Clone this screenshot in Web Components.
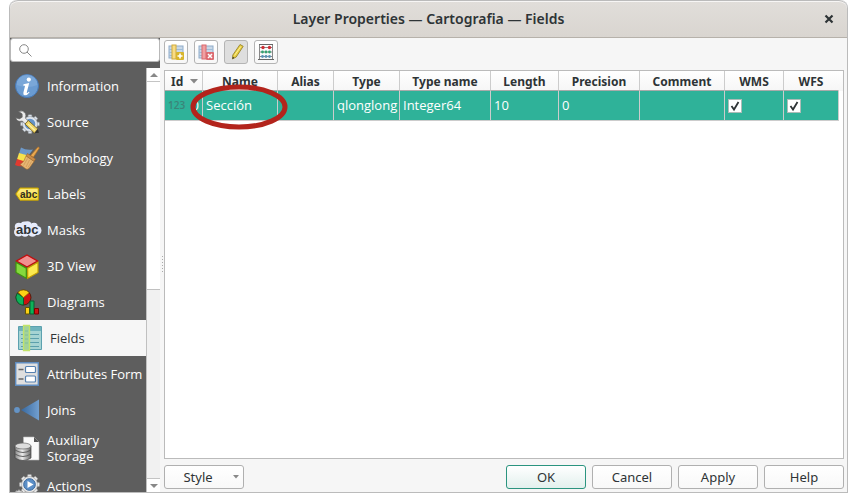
<!DOCTYPE html>
<html lang="en">
<head>
<meta charset="utf-8">
<title>Layer Properties — Cartografia — Fields</title>
<style>
  html, body { margin: 0; height: 100%; background: #fff; }
  body { font: 13px/16px "Noto Sans", sans-serif; color: #2e3436; overflow: hidden; }
</style>
</head>
<body>
<qp-dialog heading="Layer Properties — Cartografia — Fields">
  <qp-sidebar slot="nav">
    <qp-page icon="info">Information</qp-page>
    <qp-page icon="source">Source</qp-page>
    <qp-page icon="symbology">Symbology</qp-page>
    <qp-page icon="labels">Labels</qp-page>
    <qp-page icon="masks">Masks</qp-page>
    <qp-page icon="cube">3D View</qp-page>
    <qp-page icon="diagrams">Diagrams</qp-page>
    <qp-page icon="fields" selected>Fields</qp-page>
    <qp-page icon="form">Attributes Form</qp-page>
    <qp-page icon="joins">Joins</qp-page>
    <qp-page icon="storage">Auxiliary Storage</qp-page>
    <qp-page icon="actions">Actions</qp-page>
  </qp-sidebar>
  <qp-toolbar slot="tools"></qp-toolbar>
  <qp-fields-table slot="content"></qp-fields-table>
  <qp-button slot="menu" drop>Style</qp-button>
  <qp-button slot="actions" primary>OK</qp-button>
  <qp-button slot="actions">Cancel</qp-button>
  <qp-button slot="actions">Apply</qp-button>
  <qp-button slot="actions">Help</qp-button>
</qp-dialog>

<script>
const gear = (cx, cy, r, fill, stroke) => {
  let teeth = '';
  for (let i = 0; i < 8; i++) {
    teeth += `<rect x="${cx - r * .24}" y="${cy - r * 1.25}" width="${r * .48}" height="${r * .6}" rx=".6" transform="rotate(${i * 45} ${cx} ${cy})"/>`;
  }
  return `<g fill="${fill}" stroke="${stroke}" stroke-width=".5">${teeth}<circle cx="${cx}" cy="${cy}" r="${r}"/></g>`;
};

const tableIcon = `
  <rect x="1" y="2" width="14" height="12" fill="#c9d9e8" stroke="#8fabc9"/>
  <path d="M1 5.500h14M1 8.500h14M1 11.500h14" stroke="#9fbcd8" fill="none"/>`;

const icons = {
  info: `<circle cx="12" cy="12" r="11.500" fill="#6a9bd1" stroke="#4678b5"/>
    <path d="M1.500 11a10.500 10.500 0 0 1 21 0q-10 4-21 0z" fill="#8db5e0" opacity=".45"/>
    <circle cx="13.800" cy="5.600" r="2.100" fill="#fff"/>
    <path d="M8.500 10.300l5.700-1.300-2.400 9.300q-.2 1 .6.6l1.500-1.100.6.700q-2.300 3-4.800 2.800-1.900-.3-1.300-2.800l1.700-6.700-1.800-.1z" fill="#fff"/>`,
  source: gear(15, 14, 7.500, '#dfe5ec', '#8b9097') + `
    <circle cx="15" cy="14" r="5.300" fill="#6593c7"/>
    <path d="M3.500 1.500Q8-.5 10.500 3.500q.9 2-.2 4.500l3 3-3 3-3-3Q2 12.500.8 7.800l3.500 1.100 2.900-1.700-.1-3.400z" fill="#ececec" stroke="#666" stroke-width=".7"/>
    <path d="M10 14l3.300-3.500 9.500 8.500-3.300 4.200z" fill="#f0d566" stroke="#6b5a22" stroke-width=".8"/>
    <path d="M13 14l7 6.500" stroke="#fff3a6" stroke-width="1.200"/><path d="M19.500 23.200l3.300-4.200 1.200 3.800z" fill="#333"/>`,
  symbology: `<path d="M6 1.500Q11 4.500 18 3.500L13 10 4 7.500z" fill="#6d98c8"/>
    <path d="M4 7l9 2.500-4 7-7-3z" fill="#f7e24d"/><path d="M2 13l8 2.500-2 4.500q-4 1-8-1z" fill="#e03a30"/>
    <path d="M23.200.8l1.200 1.200-6.200 9.500-2.700-2z" fill="#e8a850" stroke="#a86b28" stroke-width=".7"/>
    <path d="M12.500 7.500l8 5.500-1.500 2.500L11 10z" fill="#c98c4a" stroke="#9b6125" stroke-width=".6"/>
    <path d="M11 10l8 5.500-5 7q-1.500 1-3 .5L5 18.500q4.500-2.500 6-8.500z" fill="#e6b573" stroke="#a36c2c" stroke-width=".6"/>
    <path d="M12.500 12.500L8.500 19.500M14.500 14L11 21M16.500 15.500L13 21.500" stroke="#c48f4e" stroke-width=".6"/>`,
  labels: `<path d="M.8 12L5 6h18.300v12.200H5z" fill="#f7dd45" stroke="#c4a000"/>
    <path d="M5.500 7h17v4.500h-20z" fill="#fdf08e" opacity=".7"/>
    <text x="5" y="15.500" font-family="Liberation Sans" font-weight="bold" font-size="10" fill="#302e20">abc</text>`,
  masks: `<g fill="#e6ebfb"><circle cx="3.500" cy="14" r="4.500"/><circle cx="3.800" cy="8.800" r="4"/><circle cx="9.500" cy="7.500" r="4"/><circle cx="12.500" cy="7.800" r="4.500"/>
    <circle cx="19" cy="8.500" r="3.800"/><circle cx="22" cy="12.500" r="4.500"/><circle cx="10" cy="14.500" r="4.300"/><circle cx="17.500" cy="14.500" r="4.300"/></g>
    <text x="1" y="15.500" font-family="Liberation Sans" font-weight="bold" font-size="13" fill="#2e3436">abc</text>`,
  cube: `<path d="M12 .8l11 6.700v11L12 24.500 1 18.500v-11z" fill="#555"/>
    <path d="M12 1l10.500 6L12 13 1.500 7z" fill="#f29090" stroke="#c40c0c" stroke-width="1.400"/>
    <path d="M1 8.300l10.300 5.900v10L1 18.500z" fill="#84d93e" stroke="#40930f" stroke-width="1.200"/>
    <path d="M23 8.300l-10.300 5.900v10L23 18.500z" fill="#fce94f" stroke="#c4a000" stroke-width="1.200"/>`,
  diagrams: `<circle cx="8.500" cy="7.500" r="7.500" fill="#cc1111" stroke="#50200e"/>
    <path d="M8.500 7.500L2.300 3.200A7.500 7.500 0 0 0 8.500 15z" fill="#0db258" stroke="#075e30"/>
    <path d="M8.500 7.500L3 2.200a7.500 7.500 0 0 1 11.200.5z" fill="#fcd116" stroke="#866d00" stroke-width=".7"/>
    <path d="M10.500 17.500h4v6.500h-4z" fill="#fcd116" stroke="#665500"/>
    <path d="M15 11h4v13h-4z" fill="#0db258" stroke="#075e30"/><path d="M19.500 18.500h4V24h-4z" fill="#c11" stroke="#700"/>`,
  fields: `<path d="M.5.500h23v23H.500z" fill="#a5d3d3" stroke="#5ca1af"/><path d="M1 1h22v4H1z" fill="#6fb3bd"/>
    <path d="M3 8.500h18M3 12.500h18M3 16.500h18M3 20.500h18" stroke="#5b9fac" stroke-width="1.200"/>
    <path d="M5.500-.5h6v25h-6z" fill="#a3d29a" stroke="#c2e368" stroke-width="1.300"/><path d="M7 5h3M7 9h3M7 13h3M7 17h3" stroke="#7fc09a"/>`,
  form: `<path d="M.7.700h22.600v22.600H.700z" fill="#dfdfdf" stroke="#5f8cbf" stroke-width="1.400"/>
    <rect x="10.500" y="4.500" width="10" height="6" rx="1" fill="#fff" stroke="#5580b0" stroke-width="1.200"/>
    <rect x="10.500" y="14" width="10" height="6" rx="1" fill="#fff" stroke="#5580b0" stroke-width="1.200"/>
    <path d="M3.500 7.500h5M3.500 17h5" stroke="#666" stroke-width="1.600"/>`,
  joins: `<defs><linearGradient id="j"><stop stop-color="#37689f"/><stop offset="1" stop-color="#729fcf"/></linearGradient></defs>
    <circle cx="2" cy="12" r="2.900" fill="#6594c6"/><path d="M6 12L24 1.500v21z" fill="url(#j)"/>`,
  storage: `<path d="M8.500 1H19l5 5v18H8.500z" fill="#fafafa" stroke="#bbb" stroke-width=".6"/><path d="M19 1v5h5z" fill="#555"/>
    <defs><linearGradient id="s"><stop stop-color="#888"/><stop offset=".45" stop-color="#eee"/><stop offset="1" stop-color="#666"/></linearGradient></defs>
    <path d="M0 10v12q8 5 16 0V10z" fill="url(#s)" stroke="#444" stroke-width=".7"/>
    <path d="M0 14q8 5 16 0M0 18q8 5 16 0" fill="none" stroke="#555" stroke-width=".9"/>
    <ellipse cx="8" cy="10" rx="8" ry="3" fill="#ddd" stroke="#666" stroke-width=".7"/>`,
  actions: gear(14.500, 10.500, 8, '#e8e8e8', '#999') + gear(4, 20, 3.500, '#ddd', '#888') + `
    <circle cx="14.500" cy="10.500" r="5.800" fill="#5c8fc7" stroke="#37659b"/><path d="M12.500 7l6 3.500-6 3.500z" fill="#fff"/>`,
  add: tableIcon + `<rect x="4" y="1" width="4" height="14" fill="#f8dc85" stroke="#d0aa3a"/>
    <rect x="8" y="8" width="8" height="8" rx="1" fill="#d8b52c"/><path d="M12 9.500v5M9.500 12h5" stroke="#fff" stroke-width="1.600"/>`,
  remove: tableIcon + `<rect x="4" y="1" width="4" height="14" fill="#f0a0a2" stroke="#d9686c"/>
    <rect x="8" y="8" width="8" height="8" rx="1" fill="#dc6a70"/><path d="M10 10l4 4M14 10l-4 4" stroke="#fff" stroke-width="1.500"/>`,
  pencil: `<path d="M12 .5l3.200 1.800-7 10.700L4.500 15l.3-4z" fill="#e8ce42" stroke="#8d7a22" stroke-width=".8"/>
    <path d="M12.800 2.500l-6.300 9" stroke="#fff39b"/><path d="M4.500 15l.2-2.300 1.700 1z" fill="#333"/>`,
  abacus: `<path d="M1.500 1v14M14.500 1v14M1 3.500h14M1 8h14M1 12.500h14" fill="none" stroke="#888"/><path d="M0 15.500h16M1 .5h14" stroke="#666"/>
    <g fill="#cf2f35"><circle cx="5" cy="3.500" r="1.700"/><circle cx="11.500" cy="3.500" r="1.700"/></g>
    <g fill="#35a270"><circle cx="4.500" cy="8" r="1.400"/><circle cx="8" cy="8" r="1.400"/><circle cx="11.500" cy="8" r="1.400"/></g>
    <g fill="#5b93b5"><circle cx="4.500" cy="12.500" r="1.400"/><circle cx="8" cy="12.500" r="1.400"/><circle cx="11.500" cy="12.500" r="1.400"/></g>`
};

class Base extends HTMLElement {
  constructor() {
    super();
    this.attachShadow({ mode: 'open' });
  }
  connectedCallback() {
    this.shadowRoot.innerHTML = `<style>*{box-sizing:border-box}svg{display:block}button,input{font:inherit;color:inherit}${this.css()}</style>${this.html()}`;
  }
}

customElements.define('qp-icon', class extends Base {
  css() { return `:host{display:block;flex:none;width:24px;height:24px}svg{width:100%;height:100%;overflow:visible}`; }
  html() {
    const size = this.getAttribute('box') || 24;
    return `<svg viewBox="0 0 ${size} ${size}" aria-hidden="true">${icons[this.getAttribute('name')]}</svg>`;
  }
});

customElements.define('qp-dialog', class extends Base {
  css() { return `
    :host{display:grid;grid-template-rows:38px minmax(0,1fr);box-sizing:border-box;margin:0 9px;height:calc(100vh - 9px);
      border:1px solid #bbb;border-top:0;border-radius:8px 8px 0 0;background:#f6f6f6;overflow:hidden}
    header{display:grid;grid-template-columns:36px 1fr 36px;align-items:center;border-top:1px solid #bbb;border-bottom:1px solid #b6b1aa;
      border-radius:8px 8px 0 0;background:linear-gradient(#e1deda,#d9d5d0);box-shadow:inset 0 1px #f7f6f5}
    h1{grid-column:2;margin:0;text-align:center;font-size:14px;line-height:20px;font-weight:600}
    .close{border:0;background:none;padding:0;width:24px;height:24px;display:grid;place-items:center;justify-self:center}
    .body{display:grid;grid-template-columns:150px 4px minmax(0,1fr);min-height:0}
    .split{align-self:center;height:18px;justify-self:center;width:1px;background:repeating-linear-gradient(#aaa 0 1px,transparent 1px 3px)}
    main{display:grid;grid-template-rows:24px minmax(0,1fr) 24px;gap:6px;padding:2px 3px 3px 0;min-height:0}
    footer{display:flex;gap:6px}
    .gap{flex:1}`; }
  html() { return `
    <header><h1>${this.getAttribute('heading')}</h1>
      <button class="close" aria-label="Close"><svg width="10" height="10" viewBox="0 0 10 10"><path d="M1.500 1.500l7 7M8.500 1.500l-7 7" stroke="#2e3436" stroke-width="2.200"/></svg></button></header>
    <div class="body"><slot name="nav"></slot><div class="split"></div>
      <main><slot name="tools"></slot><slot name="content"></slot>
        <footer><slot name="menu"></slot><span class="gap"></span><slot name="actions"></slot></footer></main></div>`; }
});

customElements.define('qp-sidebar', class extends Base {
  css() { return `
    :host{display:grid;grid-template-columns:minmax(0,1fr);grid-template-rows:24px minmax(0,1fr);gap:6px;background:#5e5e5e;min-height:0;font-family:"Open Sans",sans-serif}
    label{display:flex;align-items:center;gap:4px;padding:0 8px;background:#fff;border:1px solid #b8b8b8;border-radius:3px}
    input{flex:1;min-width:0;border:0;padding:0;background:none;outline:0}
    .area{display:grid;grid-template-columns:minmax(0,1fr) 14px;min-height:0}
    nav{overflow:hidden}
    .bar{display:grid;grid-template-rows:14px 208fr 188fr 14px;border-left:1px solid #c0c0c0;background:#f1f1f1;min-height:0}
    .bar button{border:0;padding:0;background:#fff;display:grid;place-items:center}
    .bar button:first-child{border-bottom:1px solid #c4c4c4}
    .bar button:last-child{border-top:1px solid #c4c4c4}
    .thumb{background:#fff;border-bottom:1px solid #c0c0c0}`; }
  html() { return `
    <label><svg width="13" height="13" viewBox="0 0 13 13" fill="none" stroke="#888"><circle cx="5" cy="5" r="4.300"/><path d="M8 8l4.500 4.500"/></svg><input type="text" aria-label="Search"></label>
    <div class="area"><nav><slot></slot></nav>
      <div class="bar"><button aria-label="Scroll up"><svg width="8" height="4"><path d="M0 4l4-4 4 4z" fill="#888"/></svg></button>
        <div class="thumb"></div><div></div>
        <button aria-label="Scroll down"><svg width="8" height="4"><path d="M0 0l4 4 4-4z" fill="#888"/></svg></button></div></div>`; }
});

customElements.define('qp-page', class extends Base {
  css() { return `
    :host{display:block;color:#fff}
    button{display:flex;align-items:center;gap:8px;width:100%;min-height:36px;padding:4px 0 4px 5px;border:0;background:none;text-align:left}
    :host([selected]) button{background:#f6f6f6;color:#2e3436;padding-left:8px}`; }
  html() { return `<button><qp-icon name="${this.getAttribute('icon')}"></qp-icon><span><slot></slot></span></button>`; }
});

customElements.define('qp-toolbar', class extends Base {
  css() { return `
    :host{display:flex;gap:6px}
    button{width:24px;height:24px;padding:0;display:grid;place-items:center;border:1px solid #b4b4b4;border-radius:3px;background:linear-gradient(#fff,#f7f7f7)}
    button[aria-pressed=true]{background:#dedede}
    qp-icon{width:16px;height:16px}`; }
  html() {
    return [['add', 'New field'], ['remove', 'Delete field'], ['pencil', 'Toggle editing'], ['abacus', 'Field calculator']]
      .map(([i, t]) => `<button aria-label="${t}"${i === 'pencil' ? ' aria-pressed="true"' : ''}><qp-icon box="16" name="${i}"></qp-icon></button>`).join('');
  }
});

customElements.define('qp-check', class extends Base {
  css() { return `
    :host{display:inline-grid;vertical-align:middle}
    input,svg{grid-area:1/1}
    input{appearance:none;margin:0;width:14px;height:14px;background:#fff;border:1px solid #aebcb8}
    svg{pointer-events:none;visibility:hidden}
    input:checked+svg{visibility:visible}`; }
  html() { return `<input type="checkbox" checked aria-label="${this.getAttribute('label')}"><svg width="14" height="14" viewBox="0 0 14 14"><path d="M3.500 7l2.500 3.500L10.500 3" fill="none" stroke="#2e3436" stroke-width="1.800"/></svg>`; }
});

customElements.define('qp-fields-table', class extends Base {
  css() { return `
    :host{display:block;border:1px solid #bbb;background:linear-gradient(#fff,#f6f6f6) 0 0/100% 20px no-repeat #fff;min-height:0}
    table{table-layout:fixed;border-collapse:separate;border-spacing:0;width:674px}
    th,td{border-right:1px solid #ccc;padding:0 3px;white-space:nowrap}
    th{height:20px;padding-top:2px;font-size:12px;font-weight:700;border-bottom:1px solid #aaa;text-align:center}
    th:last-child{border-right-color:transparent}
    td{height:30px;padding-bottom:2px;font-family:"Open Sans",sans-serif;text-align:left;background:#2fb299;color:#fff;border-bottom:1px solid #ccc}
    .id{display:flex;align-items:center;justify-content:space-between}
    .kind{font-size:10px;font-weight:600;color:#3b8478}
    .sort{display:flex;align-items:center;justify-content:space-between;padding:0 1px 0 3px}
    .marked{position:relative}
    .ring{position:absolute;left:-13px;top:-8px;overflow:visible;z-index:1;pointer-events:none}`; }
  html() {
    const cols = [['Id', 38], ['Name', 75], ['Alias', 56], ['Type', 66], ['Type name', 91], ['Length', 68], ['Precision', 81], ['Comment', 85], ['WMS', 59], ['WFS', 55]];
    return `<table><colgroup>${cols.map(c => `<col style="width:${c[1]}px">`).join('')}</colgroup>
      <thead><tr>${cols.map(([n], i) => `<th scope="col">${i ? n : `<span class="sort">${n}<svg width="8" height="5"><path d="M0 0l4 4.500L8 0z" fill="#888"/></svg></span>`}</th>`).join('')}</tr></thead>
      <tbody><tr><td><span class="id"><span class="kind">123</span><span>0</span></span></td>
        <td class="marked">Sección<svg class="ring" width="98" height="46" viewBox="0 0 98 46"><ellipse cx="49" cy="24" rx="46" ry="20" fill="none" stroke="#b3241c" stroke-width="5"/></svg></td>
        <td></td><td>qlonglong</td><td>Integer64</td><td>10</td><td>0</td><td></td>
        <td><qp-check label="WMS"></qp-check></td><td><qp-check label="WFS"></qp-check></td></tr></tbody></table>`;
  }
});

customElements.define('qp-button', class extends Base {
  css() { return `
    :host{display:block}
    button{display:flex;align-items:center;justify-content:center;width:80px;height:24px;padding:0 4px;border:1px solid #b0b0b0;border-radius:3px;background:linear-gradient(#fff,#f8f8f8)}
    :host([primary]) button{border-color:#2b947f;background:linear-gradient(#fff,#e2f0ed)}
    :host([drop]) span{flex:1;text-align:center;padding-right:6px}`; }
  html() {
    return `<button><span><slot></slot></span>${this.hasAttribute('drop') ? '<svg width="6" height="4"><path d="M0 0h6L3 3.500z" fill="#888"/></svg>' : ''}</button>`;
  }
});
</script>
</body>
</html>
